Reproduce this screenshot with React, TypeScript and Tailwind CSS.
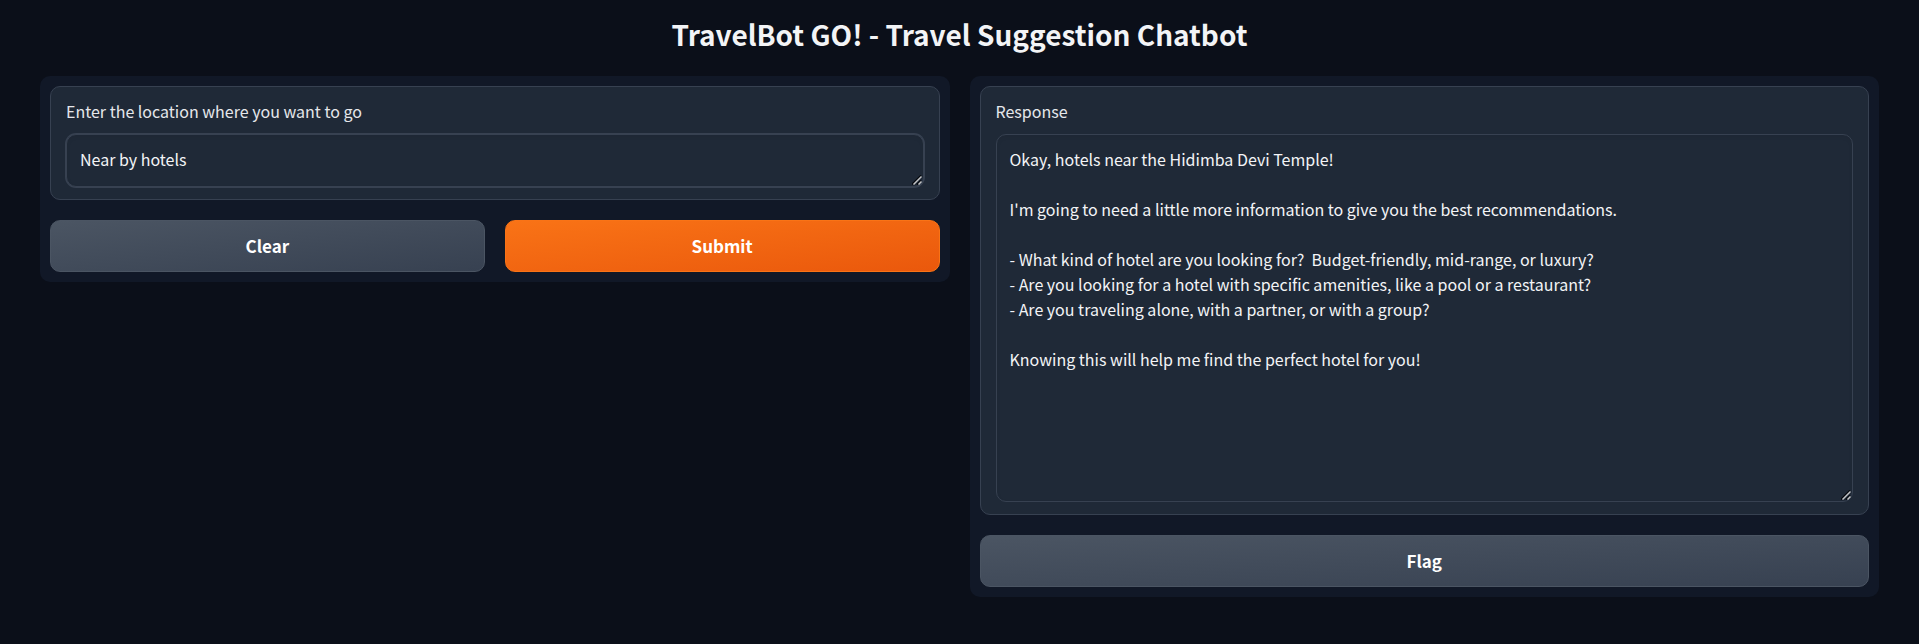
import { useState } from "react";
import type { ReactNode } from "react";

const RESPONSE = `Okay, hotels near the Hidimba Devi Temple!

I'm going to need a little more information to give you the best recommendations.

- What kind of hotel are you looking for?  Budget-friendly, mid-range, or luxury?
- Are you looking for a hotel with specific amenities, like a pool or a restaurant?
- Are you traveling alone, with a partner, or with a group?

Knowing this will help me find the perfect hotel for you!`;

const fieldStyles =
  "block w-full resize-y rounded-[10px] border border-[#374151] bg-[#1f2937] px-[13px] py-3 text-base leading-[25px] text-[#f3f4f6] shadow-[inset_0_2px_4px_rgba(0,0,0,0.05)] outline-none [&::-webkit-resizer]:bg-transparent";
const buttonStyles =
  "h-13 w-full rounded-[10px] border bg-linear-to-br text-[17px] font-bold text-white";
const secondaryStyles = "border-[#4b5563] from-[#4b5563] to-[#374151]";
const primaryStyles = "border-[#f97316] from-[#f97316] to-[#ea580c]";

function Grip() {
  return (
    <svg
      viewBox="0 0 10 10"
      aria-hidden="true"
      className="pointer-events-none absolute right-0.5 bottom-0.5 size-2.5"
      fill="none"
    >
      <path d="M0 9.5 9 0.5M5 9.5 9 5.5" stroke="#05070c" strokeWidth="1.6" />
      <path d="M1.5 9.5 9.5 1.5M6.5 9.5 9.5 6.5" stroke="#c3c4c7" strokeWidth="1.5" />
    </svg>
  );
}

function Field({
  id,
  label,
  children,
}: {
  id: string;
  label: string;
  children: ReactNode;
}) {
  return (
    <div className="rounded-[10px] border border-[#374151] bg-[#1f2937] px-[15px] py-3">
      <label htmlFor={id} className="mb-[11px] block text-base text-[#e5e7eb]">
        {label}
      </label>
      <div className="relative">
        {children}
        <Grip />
      </div>
    </div>
  );
}

export default function App() {
  const [query, setQuery] = useState("Near by hotels");
  const [response, setResponse] = useState(RESPONSE);

  return (
    <div className="min-h-screen bg-[#0b0f19] px-10 pt-3.5 pb-10 font-['Noto_Sans_CJK_SC',sans-serif]">
      <h1 className="mb-[22px] text-center text-[28px] leading-10 font-bold text-[#f3f4f6]">
        TravelBot GO! - Travel Suggestion Chatbot
      </h1>
      <main className="grid grid-cols-1 items-start gap-5 md:grid-cols-2">
        <section className="flex flex-col gap-5 rounded-[10px] bg-[#111827] p-2.5">
          <Field id="location" label="Enter the location where you want to go">
            <textarea
              id="location"
              rows={1}
              value={query}
              onChange={(e) => setQuery(e.target.value)}
              className={`${fieldStyles} h-[53px] overflow-hidden ring-1 ring-[#374151]`}
            />
          </Field>
          <div className="grid grid-cols-2 gap-5">
            <button
              type="button"
              onClick={() => {
                setQuery("");
                setResponse("");
              }}
              className={`${buttonStyles} ${secondaryStyles}`}
            >
              Clear
            </button>
            <button type="submit" className={`${buttonStyles} ${primaryStyles}`}>
              Submit
            </button>
          </div>
        </section>
        <section className="flex flex-col gap-5 rounded-[10px] bg-[#111827] p-2.5">
          <Field id="response" label="Response">
            <textarea
              id="response"
              readOnly
              value={response}
              className={`${fieldStyles} h-92`}
            />
          </Field>
          <button type="button" className={`${buttonStyles} ${secondaryStyles}`}>
            Flag
          </button>
        </section>
      </main>
    </div>
  );
}
